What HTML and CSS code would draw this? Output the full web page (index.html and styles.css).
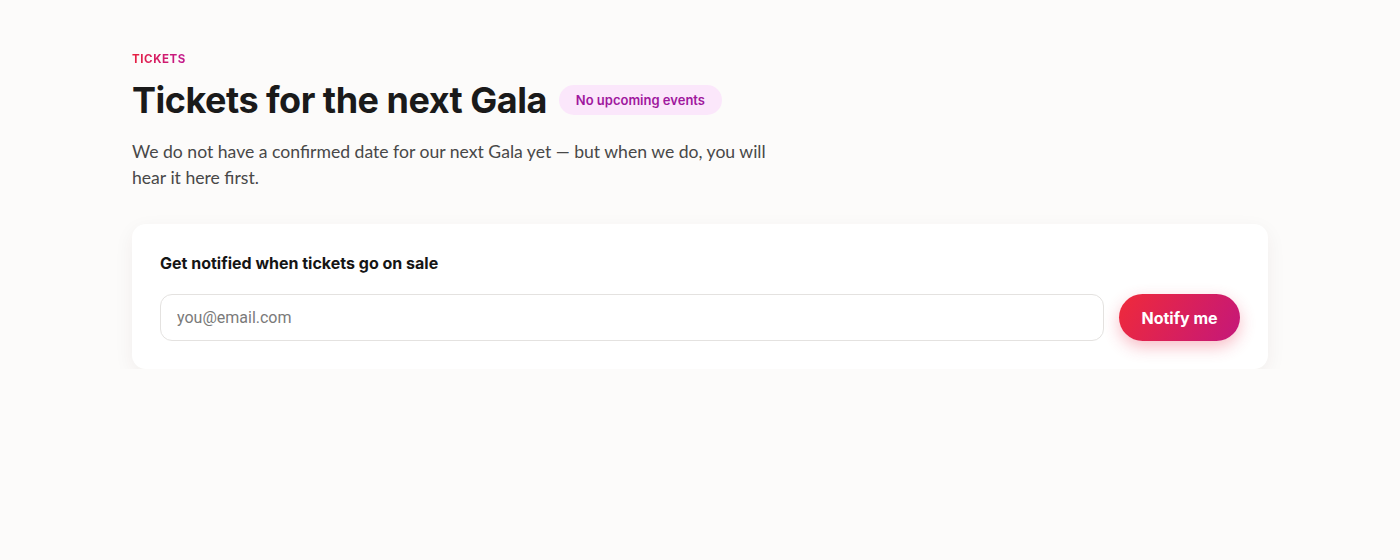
FILE: index.html
```html
<!DOCTYPE html>
<html lang="en">
  <head>
    <meta charset="UTF-8" />
    <meta name="viewport" content="width=device-width, initial-scale=1.0" />
    <title>Tickets</title>
    <link rel="stylesheet" href="styles.css">
  </head>
  <body>
    <main class="tickets">
      <header class="tickets-head">
        <p class="eyebrow">Tickets</p>
        <div class="title-row">
          <h1>Tickets for the next Gala</h1>
          <span class="badge">No upcoming events</span>
        </div>
        <p class="intro">
          We do not have a confirmed date for our next Gala yet — but when we do, you will
          hear it here first.
        </p>
      </header>
      <section class="notify">
        <h2>Get notified when tickets go on sale</h2>
        <form class="notify-form">
          <input type="email" placeholder="you@email.com" />
          <button type="button">Notify me</button>
        </form>
      </section>
    </main>
  </body>
</html>
```

FILE: styles.css
```css
body {
  margin: 0;
  background-color: #fcfbfa;
  font-family: "Liberation Sans", Arial, sans-serif;
  color: #1a1a1a;
}

/* Contenedor centrado */
.tickets {
  max-width: 1136px;
  margin: auto;
  padding-top: 49px;
}

.eyebrow {
  margin: 0;
  font-family: Inter, sans-serif;
  font-size: 11.5px;
  font-weight: 700;
  letter-spacing: 0.05em;
  line-height: 16px;
  text-transform: uppercase;
  background: linear-gradient(90deg, #e8213f, #c0188f);
  -webkit-background-clip: text;
  background-clip: text;
  color: transparent;
  display: inline-block;
}

.title-row {
  display: flex;
  align-items: center;
  gap: 12px;
  margin-top: 11px;
}

.title-row h1 {
  margin: 0;
  font-family: Inter, sans-serif;
  font-size: 36px;
  font-weight: 700;
  letter-spacing: -0.014em;
  line-height: 44px;
  color: #1a1a1a;
}

.badge {
  background-color: #fbe7fb;
  color: #a0189e;
  font-family: Inter, sans-serif;
  font-size: 13px;
  font-weight: 600;
  padding: 7px 17px;
  border-radius: 999px;
  line-height: 16px;
}

.intro {
  margin: 17px 0 0;
  max-width: 650px;
  font-family: Lato, sans-serif;
  font-size: 17.6px;
  line-height: 26px;
  color: #484848;
}

/* Tarjeta del formulario */
.notify {
  margin-top: 33px;
  background-color: #fff;
  border-radius: 14px;
  padding: 28px;
  box-shadow: 0 6px 20px rgba(60, 30, 20, 0.06);
}

.notify h2 {
  margin: 0;
  font-family: Inter, sans-serif;
  font-size: 16px;
  font-weight: 700;
  line-height: 22px;
  color: #151515;
}

.notify-form {
  display: flex;
  gap: 15px;
  margin-top: 20px;
}

.notify-form input {
  flex: 1;
  height: 47px;
  box-sizing: border-box;
  border: 1px solid #e4e2e0;
  border-radius: 12px;
  padding: 0 16px;
  font-family: Roboto, sans-serif;
  font-size: 16px;
  color: #333;
  background-color: #fff;
}

.notify-form input::placeholder {
  color: #7a7a7a;
}

.notify-form button {
  width: 121px;
  height: 47px;
  border: none;
  border-radius: 999px;
  background: linear-gradient(120deg, #ef2a3a, #c4177a);
  color: #fff;
  font-family: Inter, sans-serif;
  font-size: 16px;
  font-weight: 700;
  box-shadow: 0 6px 16px rgba(232, 40, 70, 0.3);
}
```
